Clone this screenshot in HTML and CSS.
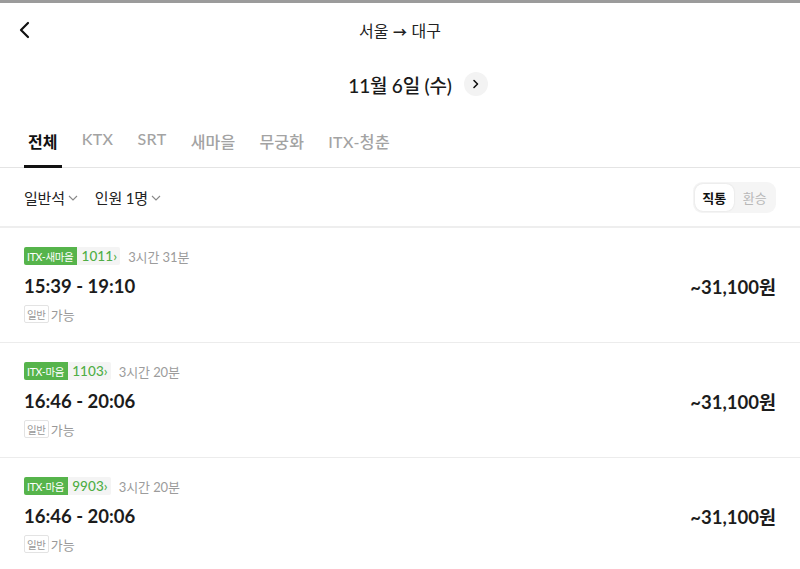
FILE: index.html
```html
<!DOCTYPE html>
<html lang="ko">
<head>
<meta charset="utf-8">
<link rel="stylesheet" href="styles.css">
</head>
<body>
<div class="app">
  <header class="topbar">
    <button class="back" aria-label="뒤로">
      <svg width="12" height="18" viewBox="0 0 12 18"><path d="M10 2 L3 9 L10 16" fill="none" stroke="#111" stroke-width="2.2" stroke-linecap="round" stroke-linejoin="round"/></svg>
    </button>
    <h1 class="title">서울 <span class="arrow">→</span> 대구</h1>
  </header>

  <div class="date-row">
    <span class="date">11월 6일 (수)</span>
    <span class="next">
      <svg width="8" height="10" viewBox="0 0 8 10"><path d="M2 1.5 L5.5 5 L2 8.5" fill="none" stroke="#111" stroke-width="1.6" stroke-linecap="round" stroke-linejoin="round"/></svg>
    </span>
  </div>

  <nav class="tabs">
    <span class="tab active">전체</span>
    <span class="tab">KTX</span>
    <span class="tab">SRT</span>
    <span class="tab ko">새마을</span>
    <span class="tab ko">무궁화</span>
    <span class="tab">ITX-청춘</span>
  </nav>

  <div class="filters">
    <div class="selects">
      <span class="select">일반석 <svg class="chev" width="10" height="6" viewBox="0 0 10 6"><path d="M1 1 L5 5 L9 1" fill="none" stroke="#888" stroke-width="1.1"/></svg></span>
      <span class="select">인원 1명 <svg class="chev" width="10" height="6" viewBox="0 0 10 6"><path d="M1 1 L5 5 L9 1" fill="none" stroke="#888" stroke-width="1.1"/></svg></span>
    </div>
    <div class="toggle">
      <span class="opt on">직통</span>
      <span class="opt">환승</span>
    </div>
  </div>

  <ul class="list">
    <li class="card">
      <div class="info">
        <div class="meta">
          <span class="badge"><span class="kind">ITX-새마을</span><span class="no">1011›</span></span>
          <span class="dur">3시간 31분</span>
        </div>
        <div class="time">15:39 - 19:10</div>
        <div class="seat"><span class="tag">일반</span><span class="avail">가능</span></div>
      </div>
      <div class="price">~31,100원</div>
    </li>
    <li class="card">
      <div class="info">
        <div class="meta">
          <span class="badge"><span class="kind">ITX-마음</span><span class="no">1103›</span></span>
          <span class="dur">3시간 20분</span>
        </div>
        <div class="time">16:46 - 20:06</div>
        <div class="seat"><span class="tag">일반</span><span class="avail">가능</span></div>
      </div>
      <div class="price">~31,100원</div>
    </li>
    <li class="card">
      <div class="info">
        <div class="meta">
          <span class="badge"><span class="kind">ITX-마음</span><span class="no">9903›</span></span>
          <span class="dur">3시간 20분</span>
        </div>
        <div class="time">16:46 - 20:06</div>
        <div class="seat"><span class="tag">일반</span><span class="avail">가능</span></div>
      </div>
      <div class="price">~31,100원</div>
    </li>
  </ul>
</div>
</body>
</html>
```
FILE: styles.css
```css
* { box-sizing: border-box; }
html, body { margin: 0; padding: 0; background: #fff; }
body {
  font-family: Lato, "Noto Sans CJK KR", sans-serif;
  color: #1e1e1e;
  border-top: 3px solid #9b9b9b;
  overflow: hidden;
}
.app { width: 800px; }

.topbar {
  height: 54px;
  display: flex;
  align-items: center;
  justify-content: center;
  position: relative;
}
.back {
  position: absolute;
  left: 18px;
  top: 18px;
  border: 0;
  background: none;
  padding: 0;
  width: 14px;
  height: 18px;
  display: flex;
}
.title {
  margin: 0;
  font-family: "Noto Sans CJK KR", sans-serif;
  font-size: 16px;
  font-weight: 400;
  color: #222;
  line-height: 1;
  padding-bottom: 1px;
}
.arrow { font-size: 14px; font-weight: 700; }

.date-row {
  height: 58px;
  display: flex;
  align-items: center;
  justify-content: center;
  gap: 12px;
  padding-left: 36px;
  padding-bottom: 4px;
}
.date {
  font-size: 19px;
  font-weight: 500;
  color: #1a1a1a;
  letter-spacing: -0.2px;
}
.next {
  width: 24px;
  height: 24px;
  border-radius: 50%;
  background: #f3f3f3;
  display: flex;
  align-items: center;
  justify-content: center;
}

.tabs {
  display: flex;
  gap: 16px;
  padding: 0 24px;
  height: 53px;
  border-bottom: 1px solid #e4e4e4;
  align-items: stretch;
}
.tab {
  font-size: 16px;
  color: #a3a3a3;
  padding: 14px 4px 0;
  letter-spacing: 0.4px;
  font-weight: 500;
}
.tab.ko { letter-spacing: 0.2px; }
.tab.active {
  color: #111;
  font-weight: 700;
  letter-spacing: 0.1px;
  border-bottom: 3px solid #111;
  margin-bottom: -1px;
}

.filters {
  height: 60px;
  display: flex;
  align-items: center;
  justify-content: space-between;
  padding: 0 24px 0 24px;
  border-bottom: 2px solid #eeeeee;
}
.selects { display: flex; gap: 17px; }
.select {
  font-size: 15px;
  color: #222;
  display: inline-flex;
  align-items: center;
  gap: 3px;
  letter-spacing: -0.2px;
}
.chev { margin-top: 1px; }
.toggle {
  display: flex;
  background: #f5f5f5;
  border-radius: 9px;
  padding: 2px;
  gap: 2px;
  height: 31px;
  width: 83px;
}
.opt {
  flex: 1;
  display: flex;
  align-items: center;
  justify-content: center;
  font-size: 13px;
  color: #b8b8b8;
  border-radius: 8px;
}
.opt.on {
  background: #fff;
  color: #111;
  font-weight: 700;
  box-shadow: 0 0 2px rgba(0,0,0,0.12);
}

.list { list-style: none; margin: 0; padding: 0; }
.card {
  display: flex;
  align-items: center;
  justify-content: space-between;
  padding: 19px 24px 19px 24px;
  border-bottom: 1px solid #ececec;
  height: 115px;
}
.meta { display: flex; align-items: center; gap: 8px; height: 18px; }
.badge { display: flex; height: 18px; }
.kind {
  background: #56b44b;
  color: #fff;
  font-size: 10.5px;
  padding: 0 4px 0 3px;
  display: flex;
  align-items: center;
  border-radius: 2px 0 0 2px;
  letter-spacing: -0.3px;
}
.no {
  background: #f4f4f4;
  color: #4fae45;
  font-size: 13.5px;
  font-weight: 500;
  padding: 0 3px 0 4px;
  display: flex;
  align-items: center;
  gap: 1px;
  border-radius: 0 2px 2px 0;
  letter-spacing: 0.1px;
}
.dur { font-size: 13px; color: #9c9c9c; letter-spacing: -0.1px; }
.time {
  margin-top: 9px;
  font-size: 18.5px;
  font-weight: 700;
  line-height: 24px;
  color: #1c1c1c;
}
.seat { margin-top: 7px; display: flex; align-items: center; gap: 2px; height: 18px; }
.tag {
  border: 1px solid #e3e3e3;
  border-radius: 2px;
  font-size: 10.5px;
  color: #999;
  height: 18px;
  padding: 0 2px;
  display: flex;
  align-items: center;
  letter-spacing: -0.3px;
}
.avail { font-size: 13px; color: #999; }
.price {
  font-size: 18.5px;
  font-weight: 700;
  color: #1c1c1c;
  margin-top: 1px;
}
```
